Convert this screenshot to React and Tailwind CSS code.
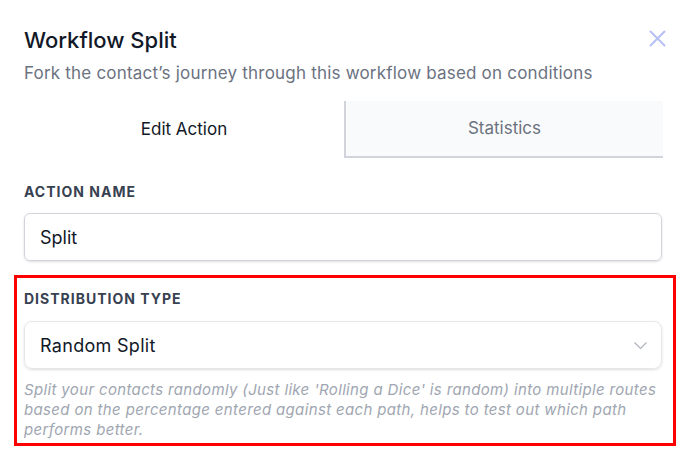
export default function App() {
  return (
    <div className="w-[690px] h-[458px] bg-white font-['Inter',sans-serif] overflow-hidden">
      <div className="pl-6 pr-6 pt-[26px] flex items-start justify-between">
        <div>
          <h2 className="text-[22px] leading-[28px] font-medium text-[#111827]">Workflow Split</h2>
          <p className="mt-[7px] text-[17px] leading-6 tracking-[0.2px] text-[#6b7280]">
            Fork the contact’s journey through this workflow based on conditions
          </p>
        </div>
        <button className="mt-[4px] text-[#b6c0f4]">
          <svg width="17" height="17" viewBox="0 0 17 17" fill="none" stroke="currentColor" strokeWidth="2" strokeLinecap="round">
            <path d="M1.5 1.5l14 14M15.5 1.5l-14 14" />
          </svg>
        </button>
      </div>

      <div className="pl-6 pr-[28px]">
        <div className="mt-4 flex w-[639px] h-[57px]">
          <div className="w-[320px] flex items-center justify-center text-[17px] text-[#111827]">Edit Action</div>
          <div className="flex-1 flex items-center justify-center bg-[#f9fafb] border-l-2 border-b-2 border-[#d1d5db] text-[17px] text-[#6b7280]">
            Statistics
          </div>
        </div>

        <label className="block mt-6 text-sm leading-5 font-bold tracking-[1px] text-[#374151] uppercase">Action Name</label>
        <div className="mt-[11px] h-12 flex items-center px-[15px] border border-[#d1d5db] rounded-md shadow-sm text-[18px] text-[#111827]">
          Split
        </div>

        <div className="mt-[14px] ml-[-10px] mr-[-14px] border-[3px] border-[#ff0000] pl-[7px] pr-[11px] pt-[11px] pb-[3px]">
          <label className="block text-sm leading-5 font-bold tracking-[1px] text-[#374151] uppercase">Distribution Type</label>
          <div className="mt-[12px] h-12 flex items-center justify-between pl-[15px] pr-[14px] border border-[#e5e7eb] rounded-lg shadow-sm text-[18px] tracking-[0.3px] text-[#111827]">
            <span>Random Split</span>
            <svg width="13" height="7" viewBox="0 0 13 7" fill="none" stroke="#b0b5bd" strokeWidth="1.2">
              <path d="M0.5 0.5l6 6 6-6" />
            </svg>
          </div>
          <p className="mt-[11px] text-[15px] leading-5 italic tracking-[0.35px] text-[#a0a6b1]">
            Split your contacts randomly (Just like 'Rolling a Dice' is random) into multiple routes based on the percentage entered against each path, helps to test out which path performs better.
          </p>
        </div>
      </div>
    </div>
  );
}
